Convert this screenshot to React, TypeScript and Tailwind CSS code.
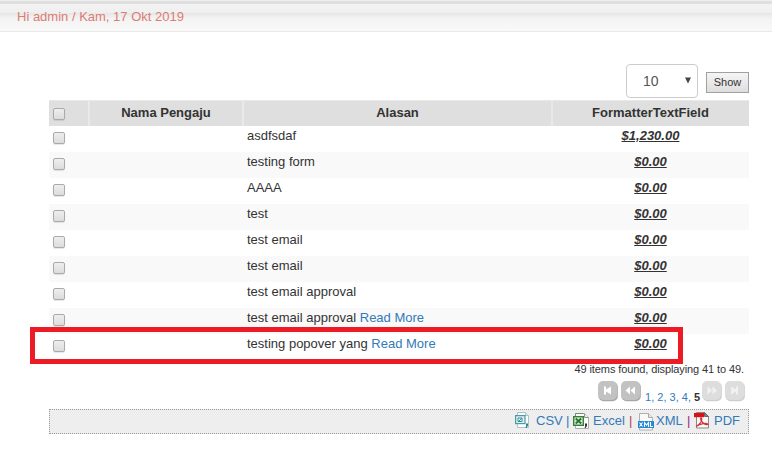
import React from "react";

const rows: { text: string; more?: boolean; amount: string }[] = [
  { text: "asdfsdaf", amount: "$1,230.00" },
  { text: "testing form", amount: "$0.00" },
  { text: "AAAA", amount: "$0.00" },
  { text: "test", amount: "$0.00" },
  { text: "test email", amount: "$0.00" },
  { text: "test email", amount: "$0.00" },
  { text: "test email approval", amount: "$0.00" },
  { text: "test email approval", more: true, amount: "$0.00" },
  { text: "testing popover yang", more: true, amount: "$0.00" },
];

function Check() {
  return (
    <span className="block h-3 w-3 rounded-[2px] border border-[#aaaaaa] bg-gradient-to-b from-[#eeeeee] to-[#dcdcdc] shadow-[0_1px_1px_rgba(0,0,0,0.1)]" />
  );
}

function PageButton({ shape, disabled }: { shape: string; disabled?: boolean }) {
  return (
    <svg width="20" height="21" viewBox="0 0 20 21" className="block" opacity={disabled ? 0.55 : 1}>
      <rect x="0.5" y="1" width="19.3" height="19.3" rx="5" fill="#a6a6a6" />
      <rect x="0" y="0" width="19" height="19" rx="5" fill="#c2c2c2" />
      <path d={shape} fill="#fff" opacity={disabled ? 0.6 : 1} />
    </svg>
  );
}

function CsvIcon() {
  return (
    <svg width="16" height="17" viewBox="0 0 16 17" className="block">
      <path d="M2.5.5h8l3 3v12h-11z" fill="#fff" stroke="#a9c4cb" />
      <path d="M10.5.5v3h3" fill="#e4f0f2" stroke="#a9c4cb" />
      <rect x=".6" y="3.6" width="9.4" height="8" fill="#d9eff2" stroke="#4e9aa8" strokeWidth="1.2" />
      <path d="M3 6h4v3.5H3zM4 9l3-3" fill="#fff" stroke="#3c8d9c" />
      <path d="M11 11.5h2v2L11.5 16h-1l.8-2.5H11z" fill="#277f91" />
    </svg>
  );
}

function ExcelIcon() {
  return (
    <svg width="16" height="17" viewBox="0 0 16 17" className="block">
      <path d="M2.5.5h9l4 4v11h-13z" fill="#fff" stroke="#a3b3a3" />
      <path d="M11.5.5v4h4" fill="#e5eee5" stroke="#8b9a8b" />
      <path d="M2.5 3V.5h8" fill="none" stroke="#5d9c5d" />
      <rect x=".7" y="3.7" width="9.6" height="8.6" fill="#d8ecd5" stroke="#377e3c" strokeWidth="1.4" />
      <path d="m2.7 5.5 5.5 5M8.2 5.5l-5.5 5" stroke="#24752c" strokeWidth="1.8" />
      <path d="M12 10.5h2v2.5l-1.5 2h-1l.8-2H12z" fill="#333" />
    </svg>
  );
}

function XmlIcon() {
  return (
    <svg width="17" height="18" viewBox="0 0 17 18" className="block">
      <path d="M1.5.5h9l4 4v12.5h-13z" fill="#f9f9f9" stroke="#b0b0b0" />
      <path d="M10.5.5v4h4" fill="#e9e9e9" stroke="#a8a8a8" />
      <rect x="0" y="8" width="16" height="7" fill="#2089d6" />
      <path d="m1.5 9.5 3 4m0-4-3 4M6.5 14V9.5L8.5 12l2-2.5V14M12.5 9v4.5H15" fill="none" stroke="#fff" strokeWidth="1.1" />
    </svg>
  );
}

function PdfIcon() {
  return (
    <svg width="16" height="17" viewBox="0 0 16 17" className="block">
      <path d="M2.5.5h8l4 4v11.5h-12z" fill="#f8f8f8" stroke="#8a8a8a" />
      <path d="M10.5.5v4h4z" fill="#888" stroke="#666" />
      <rect x="0" y="1" width="10" height="4.2" fill="#dc1118" />
      <path d="M2 14.5C6 12 8.500 8.500 7.500 6 6.500 5 6 7 7.500 9.200 9 11.500 11.500 13 14 12.500 13 10.800 6.500 11 2 14.500z" fill="none" stroke="#d2333a" strokeWidth="1.2" />
    </svg>
  );
}

const cols = "grid grid-cols-[41px_154px_309px_196px]";

export default function App() {
  return (
    <div className="relative h-[455px] w-[772px] overflow-hidden bg-white font-['Liberation_Sans',Arial,sans-serif] text-[13px] text-[#333]">
      <header className="flex h-8 flex-col border-b border-[#e9e9e9]">
        <div className="h-px bg-[#eeeeee]" />
        <div className="h-[3px] bg-[#dfdfdf]" />
        <div className="h-[9px] bg-gradient-to-b from-[#f3f3f3] to-[#efefef]" />
        <div className="flex flex-1 bg-gradient-to-b from-[#e6e6e6] via-[#f3f3f3] via-30% to-[#f9f9f9]">
          <span className="-mt-[6px] ml-[17px] leading-[20px] text-[#dc7c73]">Hi admin / Kam, 17 Okt 2019</span>
        </div>
      </header>

      <main className="ml-[49px] w-[700px] pt-8">
        <div className="flex h-9 justify-end gap-2">
          <div className="flex h-[34px] w-[72px] items-center justify-between rounded-[4px] border border-[#ccc] pl-4 pr-[5px] text-[14px] text-[#555]">
            <span>10</span>
            <svg width="8" height="7" viewBox="0 0 8 7" className="-mt-0.5"><path d="M1 .5h6L4 6.5z" fill="#444" /></svg>
          </div>
          <button className="mt-2 h-[21px] w-[43px] border border-[#a0a0a0] bg-gradient-to-b from-[#f5f5f5] to-[#dedede] text-[11px] text-[#333]">Show</button>
        </div>

        <div className={`${cols} h-[26px] border-t border-[#e9e9e9] bg-[#dfdfdf] text-center font-bold leading-[24px]`}>
          <div className="border-r-2 border-[#e9e9e9] pl-1 pt-[7px]"><Check /></div>
          <div className="border-r-2 border-[#e9e9e9]">Nama Pengaju</div>
          <div className="border-r-2 border-[#e9e9e9]">Alasan</div>
          <div className="-ml-px">FormatterTextField</div>
        </div>
        {rows.map((r, i) => (
          <div key={i} className={`${cols} h-[26px] leading-[19px] ${i % 2 ? "bg-[#f9f9f9]" : "bg-white"}`}>
            <div className="pl-1 pt-[6px]"><Check /></div>
            <div />
            <div className="pl-[3px]">
              {r.text}
              {r.more && <a className="text-[#337ab7]"> Read More</a>}
            </div>
            <div className="-ml-px text-center font-bold italic underline">{r.amount}</div>
          </div>
        ))}

        <div className="h-[19px] pr-[5px] text-right text-[11px] leading-[19px] tracking-[-0.1px]">49 items found, displaying 41 to 49.</div>
        <div className="flex h-[30px] justify-end gap-[3px] pr-1 pt-[2px] text-[11px]">
          <PageButton shape="M6 5.500h2v3l5-3v8l-5-3v3H6z" />
          <PageButton shape="m4.500 9.500 4.500-4v8zm5 0 4.500-4v8z" />
          <span className="w-[55px] whitespace-nowrap pl-px pt-[7px] leading-[19px] text-[#337ab7]">
            <a>1</a>, <a>2</a>, <a>3</a>, <a>4</a>, <b className="text-[#333]">5</b>
          </span>
          <PageButton disabled shape="m10 9.500-4.500-4v8zm5 0-4.500-4v8z" />
          <PageButton disabled shape="M13 5.500h-2v3l-5-3v8l5-3v3h2z" />
        </div>
        <div className="flex h-[25px] items-start border border-dotted border-[#999] bg-[#eee] pl-[465px] leading-[22px] text-[#337ab7]">
          <span className="flex w-[51px] shrink-0 gap-[5px]"><span className="pt-[2px]"><CsvIcon /></span>CSV</span>
          <span className="w-[7px] shrink-0 text-[#337ab7]">|</span>
          <span className="flex w-[56px] shrink-0 gap-1"><span className="pt-[3px]"><ExcelIcon /></span>Excel</span>
          <span className="w-[9px] shrink-0 text-[#b33f3f]">|</span>
          <span className="flex w-[49px] shrink-0 gap-px"><span className="pt-[3px]"><XmlIcon /></span>XML</span>
          <span className="w-[7px] shrink-0 text-[#9b2383]">|</span>
          <span className="flex shrink-0 gap-1"><span className="pt-[2px]"><PdfIcon /></span>PDF</span>
        </div>
      </main>
      <div className="absolute left-[30px] top-[327px] h-[37px] w-[653px] border-[5px] border-[#ed1c24]" />
    </div>
  );
}
